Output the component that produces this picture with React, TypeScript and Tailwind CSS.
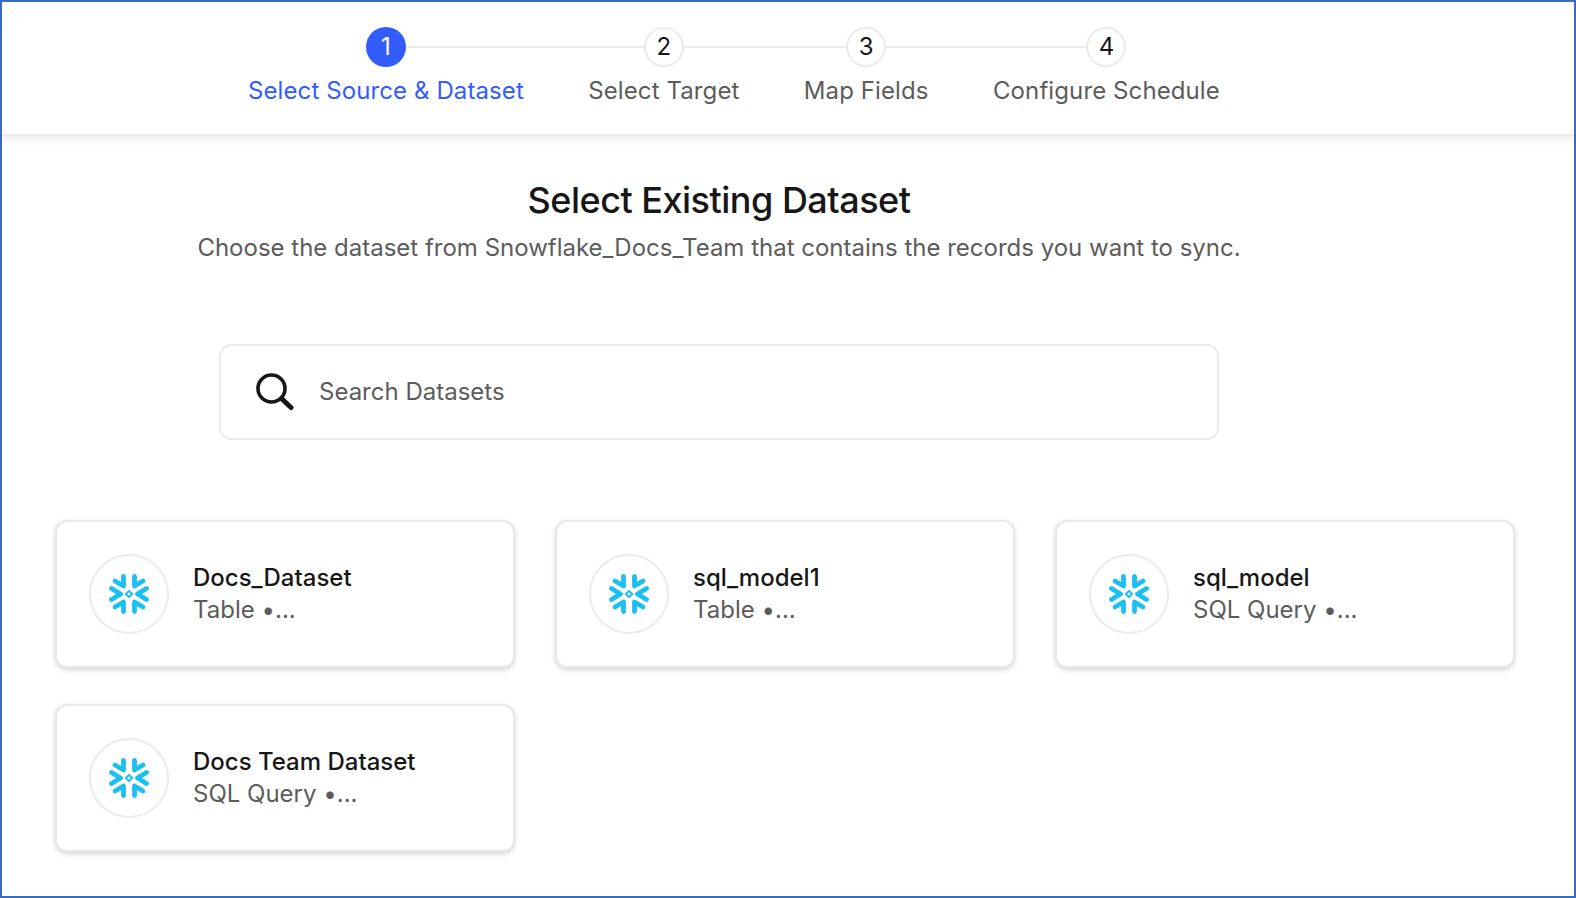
const steps = [
  { n: 1, label: 'Select Source & Dataset', active: true },
  { n: 2, label: 'Select Target' },
  { n: 3, label: 'Map Fields' },
  { n: 4, label: 'Configure Schedule' },
];

const datasets = [
  { name: 'Docs_Dataset', kind: 'Table •...' },
  { name: 'sql_model1', kind: 'Table •...' },
  { name: 'sql_model', kind: 'SQL Query •...' },
  { name: 'Docs Team Dataset', kind: 'SQL Query •...' },
];

function SnowflakeIcon() {
  return (
    <svg width="40" height="40" viewBox="-20 -20 40 40" fill="none" stroke="#1cbff2" strokeWidth="4.8" strokeLinecap="round" strokeLinejoin="round">
      <polyline points="-14,-13 -5.5,-8 -5.5,-17.5" />
      <polyline points="14,-13 5.5,-8 5.5,-17.5" />
      <polyline points="-14,13 -5.5,8 -5.5,17.5" />
      <polyline points="14,13 5.5,8 5.5,17.5" />
      <polyline points="-17.5,-5.5 -8.5,0 -17.5,5.5" />
      <polyline points="17.5,-5.5 8.5,0 17.5,5.5" />
      <rect x="-2.2" y="-2.2" width="4.4" height="4.4" transform="rotate(45)" strokeWidth="2" />
    </svg>
  );
}

function SearchIcon() {
  return (
    <svg width="38" height="38" viewBox="0 0 38 38" fill="none" stroke="#171717" strokeLinecap="round">
      <circle cx="15.5" cy="15.5" r="13.5" strokeWidth="3.6" />
      <line x1="25.5" y1="25.5" x2="35" y2="34.5" strokeWidth="5" />
    </svg>
  );
}

function Step({ n, label, active }: any) {
  return (
    <div className="relative flex flex-col items-center">
      <div
        className={
          active
            ? 'z-10 flex h-10 w-10 items-center justify-center rounded-full bg-[#335cff] text-2xl text-white'
            : 'z-10 flex h-10 w-10 items-center justify-center rounded-full border-2 border-[#ebebeb] bg-white text-2xl text-[#171717]'
        }
      >
        {n}
      </div>
      <div className={active ? 'mt-[8px] text-2xl leading-8 tracking-[0.1px] text-[#335cff]' : 'mt-[8px] text-2xl leading-8 tracking-[0.1px] text-[#5c5c5c]'}>
        {label}
      </div>
    </div>
  );
}

function DatasetCard({ name, kind }: any) {
  return (
    <div className="flex h-[148px] items-center gap-[24px] rounded-xl border-2 border-[#e8e8e8] bg-white pl-[32px] shadow-[0_2px_5px_rgba(0,0,0,0.16)]">
      <div className="flex h-20 w-20 shrink-0 items-center justify-center rounded-full border-2 border-[#ebebeb]">
        <SnowflakeIcon />
      </div>
      <div>
        <div className="text-2xl leading-8 font-medium text-[#171717]">{name}</div>
        <div className="text-2xl leading-8 text-[#5c5c5c]">{kind}</div>
      </div>
    </div>
  );
}

export default function App() {
  return (
    <div className="h-[898px] w-[1576px] overflow-hidden border-2 border-[#3a6bc4] bg-white font-['Inter',sans-serif]">
      <header className="flex h-[134px] border-b-2 border-[#ebebeb] pt-[25px] pl-[246px] shadow-[0_3px_8px_rgba(0,0,0,0.08)]">
        <div className="relative flex gap-[64.4px]">
          <div className="absolute top-[19px] left-[138px] h-[2px] w-[718px] bg-[#ebebeb]" />
          {steps.map((s) => (
            <Step key={s.n} n={s.n} label={s.label} active={s.active} />
          ))}
        </div>
      </header>
      <main>
        <div className="w-[1434px] pt-[44px] text-center">
          <h1 className="text-4xl leading-10 font-medium tracking-[-0.5px] text-[#171717]">Select Existing Dataset</h1>
          <p className="mt-[12px] text-2xl leading-8 text-[#5c5c5c]">
            Choose the dataset from Snowflake_Docs_Team that contains the records you want to sync.
          </p>
        </div>
        <div className="mt-[80px] ml-[217px] flex h-[96px] w-[1000px] items-center gap-[25px] rounded-xl border-2 border-[#ebebeb] pl-[35px]">
          <SearchIcon />
          <span className="text-2xl text-[#5c5c5c]">Search Datasets</span>
        </div>
        <div className="mt-[80px] ml-[53px] grid w-[1460px] grid-cols-3 gap-x-[40px] gap-y-[36px]">
          {datasets.map((d) => (
            <DatasetCard key={d.name} name={d.name} kind={d.kind} />
          ))}
        </div>
      </main>
    </div>
  );
}
